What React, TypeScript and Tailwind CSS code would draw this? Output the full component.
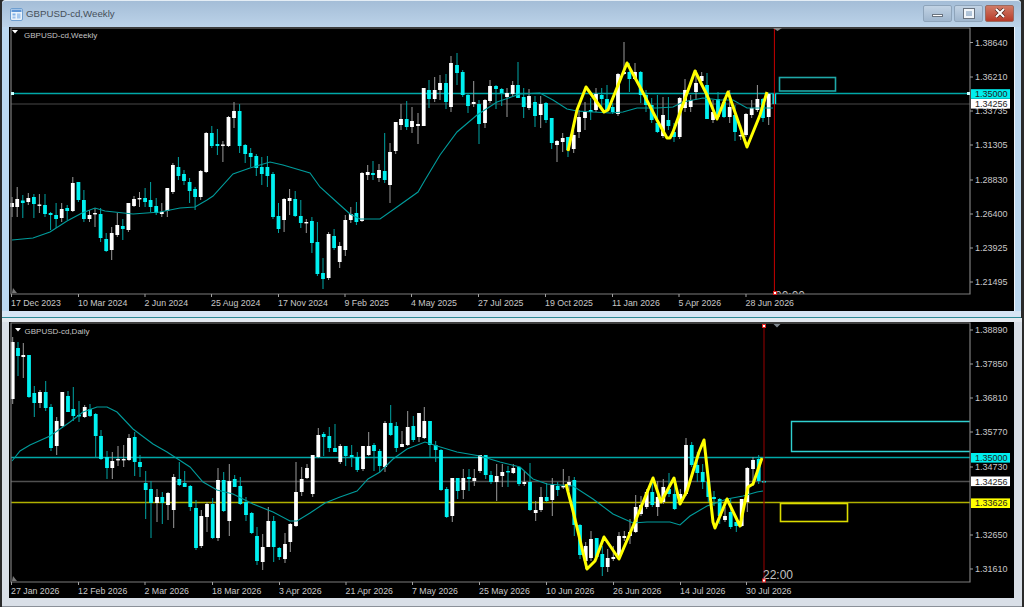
type Candle = [number, number, number, number, number, "w" | "c"];

// x, high, low, body top, body bottom, colour. All in page pixels.
const weeklyCandles: Candle[] = [
  [12, 197, 217, 203, 207, "w"], [17.2, 187, 217, 199, 207, "w"], [22.8, 195, 218, 200.5, 203, "c"], [28.3, 193, 205, 198, 202, "w"],
  [33.9, 194, 218, 197, 204, "c"], [39.4, 194, 213, 204.5, 205.5, "w"], [45, 194, 217, 205, 214, "c"], [50.6, 212, 230, 213, 215, "c"],
  [56.1, 203, 228, 215, 219, "c"], [61.7, 203, 222, 209, 218, "w"], [67.2, 205, 220, 208, 211, "c"], [72.8, 177, 212, 183, 211, "w"],
  [78.4, 182, 202, 182, 200, "c"], [83.9, 190, 222, 200, 219, "c"], [89.5, 210, 222, 215, 219, "w"], [95, 208, 227, 213, 214, "w"],
  [100.6, 208, 242, 214, 238, "c"], [106.2, 233, 252, 239, 251, "c"], [111.7, 227, 260, 233, 250, "w"], [117.3, 213, 237, 225, 235, "w"],
  [122.8, 219, 240, 226, 229, "c"], [128.4, 203, 232, 203, 230, "w"], [134, 196, 207, 199, 206, "w"], [139.5, 192, 207, 198, 199, "w"],
  [145.1, 188, 207, 198, 202, "c"], [150.6, 182, 212, 200, 207, "c"], [156.2, 198, 215, 206, 213, "c"], [161.8, 203, 217, 212, 214, "w"],
  [167.3, 188, 217, 188, 211, "w"], [172.9, 163, 194, 165, 192, "w"], [178.4, 157, 180, 167, 176, "c"], [184, 170, 185, 174, 181, "c"],
  [189.6, 178, 203, 182, 191, "c"], [195.1, 187, 210, 189, 197, "c"], [200.7, 170, 200, 171, 197, "w"], [206.2, 132, 173, 133, 172, "w"],
  [211.8, 126, 148, 133, 146, "c"], [217.4, 129, 155, 144, 146, "c"], [222.9, 141, 162, 144.5, 145.5, "w"], [228.5, 116, 147, 117, 146, "w"],
  [234, 102, 128, 111, 118, "w"], [239.6, 104, 153, 111, 146, "c"], [245.2, 144, 163, 145, 154, "c"], [250.7, 148, 167, 153, 157, "c"],
  [256.3, 154, 176, 156, 168, "c"], [261.8, 157, 185, 167, 174, "c"], [267.4, 156, 187, 167, 176, "c"], [273, 172, 219, 174, 217, "c"],
  [278.5, 203, 233, 216, 229, "c"], [284.1, 198, 232, 199, 220, "w"], [289.6, 189, 215, 198, 201, "w"], [295.2, 191, 217, 199, 216, "c"],
  [300.8, 200, 228, 216, 223, "c"], [306.3, 219, 233, 222, 223, "w"], [311.9, 217, 253, 221, 243, "c"], [317.4, 222, 276, 242, 274, "c"],
  [323, 258, 289, 273, 279, "c"], [328.6, 232, 280, 234, 278, "w"], [334.1, 229, 250, 236, 248, "c"], [339.7, 242, 268, 246, 262, "w"],
  [345.3, 215, 256, 220, 250, "w"], [350.8, 207, 223, 214, 220, "w"], [356.4, 202, 225, 213, 222, "c"], [362, 172, 222, 173, 221, "w"],
  [367.7, 165, 180, 172, 175, "w"], [373, 161, 180, 173, 175, "c"], [379, 164, 182, 170, 178, "w"], [384.7, 133, 183, 171, 180, "c"],
  [390, 143, 203, 152, 185, "w"], [395.7, 122, 154, 122, 151, "w"], [401, 104, 130, 119, 125, "w"], [406.7, 101, 130, 119, 127, "c"],
  [412, 107, 133, 121, 127, "w"], [418, 113, 144, 124, 126, "w"], [423.7, 88, 126, 88, 126, "w"], [429, 80, 108, 90, 99, "c"],
  [434.7, 77, 102, 90, 99, "w"], [440, 75, 100, 83, 90, "w"], [446, 74, 109, 83, 102, "c"], [451, 56, 112, 63, 107, "w"],
  [457, 53, 85, 65, 73, "c"], [462.7, 70, 97, 72, 95, "c"], [468, 93, 113, 95, 106, "c"], [473.7, 81, 107, 102, 104, "w"],
  [479, 100, 144, 104, 124, "c"], [485, 99, 128, 100, 123, "w"], [490, 80, 103, 86, 101, "w"], [496, 85, 109, 86, 89, "c"],
  [501.7, 88, 106, 89, 93, "c"], [507, 88, 117, 93, 97, "w"], [512.7, 81, 97, 85, 94, "w"], [518, 62, 98, 85, 98, "c"],
  [523.7, 88, 118, 97, 107, "c"], [529, 89, 110, 96, 108, "w"], [535, 96, 127, 102, 116, "c"], [540.7, 96, 128, 104, 115, "w"],
  [546, 102, 123, 103, 120, "c"], [551.7, 118, 149, 118, 143, "c"], [557, 140, 162, 141, 145, "w"], [562.7, 133, 152, 138, 142, "w"],
  [568, 137, 157, 137, 150, "c"], [573.7, 130, 153, 135, 149, "w"], [579, 110, 138, 117, 132, "w"], [585, 102, 130, 112, 118, "w"],
  [590.7, 98, 120, 110, 112, "c"], [596, 88, 112, 94, 110, "w"], [601.7, 88, 110, 95, 99, "c"], [607, 85, 110, 99, 110, "c"],
  [612.7, 103, 114, 107, 112, "c"], [618, 73, 116, 74, 114, "w"], [624, 42, 75, 72, 74, "w"], [629.4, 63, 92, 72, 79, "c"],
  [635, 63, 80, 72, 79, "w"], [640.7, 71, 103, 72, 95, "c"], [646, 90, 112, 95, 105, "c"], [651.7, 98, 123, 105, 120, "c"],
  [657.4, 95, 133, 123, 132, "c"], [663, 97, 138, 115, 136, "w"], [668.4, 97, 130, 120, 126, "c"], [674, 123, 142, 132, 137, "c"],
  [679.7, 97, 139, 98, 137, "w"], [685, 79, 112, 90, 108, "w"], [690.7, 95, 112, 100, 107, "w"], [696, 70, 100, 83, 92, "w"],
  [701.7, 72, 82, 76, 81, "w"], [707, 73, 119, 85, 119, "c"], [713, 100, 123, 112, 120, "w"], [718, 92, 118, 99, 117, "c"],
  [724, 98, 118, 102, 117, "c"], [729.7, 90, 123, 107, 117, "w"], [735, 105, 141, 115, 132, "c"], [740.7, 125, 140, 135, 136, "w"],
  [746, 113, 137, 114, 135, "w"], [751.7, 100, 118, 108, 115, "w"], [757.4, 85, 112, 99, 110, "w"], [763, 98, 122, 99, 118, "c"],
  [768.7, 93, 125, 94, 117, "w"], [774.3, 93, 105, 94, 104, "c"],
];

const dailyCandles: Candle[] = [
  [12.7, 338, 405, 343, 400, "w"], [18, 343, 377, 349, 357, "c"], [23.3, 344, 379, 356, 358, "w"], [29, 356, 399, 356, 398, "c"],
  [34.3, 387, 418, 394, 404, "c"], [40, 391, 409, 393, 404, "w"], [45.7, 382, 412, 393, 409, "c"], [51, 405, 452, 408, 449, "c"],
  [56.7, 418, 456, 422, 447, "w"], [62.3, 393, 429, 393, 427, "w"], [68, 392, 413, 397, 413, "c"], [73.3, 388, 422, 410, 417, "c"],
  [79, 402, 423, 416, 417, "c"], [84.7, 406, 419, 408, 418, "w"], [90, 405, 418, 410, 417, "c"], [95.7, 414, 459, 415, 437, "c"],
  [101, 431, 461, 437, 460, "c"], [107, 452, 480, 458, 469, "c"], [112.3, 453, 480, 462, 469, "w"], [118, 447, 467, 460, 461, "w"],
  [123.7, 446, 468, 460, 461, "w"], [129, 435, 462, 439, 461, "w"], [134.7, 433, 477, 438, 463, "c"], [140, 456, 478, 463, 468, "c"],
  [145.7, 472, 520, 484, 491, "c"], [151, 482, 539, 490, 504, "c"], [157, 490, 523, 498, 504, "w"], [162.3, 493, 525, 498, 504, "c"],
  [168, 493, 521, 494, 506, "w"], [173.7, 475, 529, 478, 511, "w"], [179.3, 463, 487, 480, 486, "c"], [184.7, 472, 488, 484, 488, "c"],
  [190.3, 486, 512, 487, 508, "c"], [196, 501, 551, 509, 549, "c"], [201.3, 511, 549, 517, 547, "w"], [207, 503, 533, 505, 518, "w"],
  [212.7, 499, 540, 505, 539, "c"], [218, 469, 542, 481, 539, "w"], [223.7, 473, 513, 481, 512, "c"], [229.3, 465, 537, 482, 522, "w"],
  [234.7, 476, 488, 480, 488, "c"], [240.3, 478, 506, 487, 505, "c"], [246, 498, 522, 503, 516, "c"], [251.7, 513, 535, 514, 534, "c"],
  [257, 528, 566, 537, 562, "c"], [262.7, 535, 571, 548, 563, "w"], [268.3, 508, 548, 522, 548, "w"], [273.7, 517, 563, 522, 548, "c"],
  [279.3, 548, 561, 549, 558, "c"], [285, 534, 564, 545, 560, "w"], [290.3, 524, 553, 525, 543, "w"], [296, 463, 528, 493, 527, "w"],
  [301.7, 468, 497, 480, 493, "w"], [307, 465, 480, 469, 479, "w"], [312.7, 456, 498, 456, 495, "w"], [318.3, 429, 459, 436, 458, "w"],
  [323.7, 433, 457, 435, 438, "c"], [329.3, 428, 453, 437, 449, "c"], [335, 425, 453, 449, 453, "c"], [340.3, 445, 465, 447, 463, "w"],
  [345.7, 447, 467, 447, 457, "c"], [351.7, 446, 468, 456, 458, "c"], [357.3, 453, 473, 458, 471, "c"], [363, 447, 472, 447, 470, "w"],
  [368.7, 433, 457, 447, 456, "w"], [374, 444, 472, 446, 452, "c"], [379.7, 450, 473, 452, 467, "c"], [385, 422, 473, 424, 468, "w"],
  [390.7, 406, 437, 424, 436, "c"], [396.3, 423, 453, 427, 449, "c"], [402, 432, 448, 445, 448, "w"], [407.7, 412, 447, 428, 446, "w"],
  [413.3, 417, 443, 427, 441, "c"], [419, 414, 443, 414, 438, "w"], [424.3, 408, 440, 422, 439, "w"], [430, 422, 458, 422, 446, "c"],
  [435.7, 442, 463, 446, 451, "c"], [441, 450, 492, 451, 491, "c"], [446.7, 488, 519, 490, 518, "c"], [452.3, 479, 523, 479, 517, "w"],
  [457.7, 479, 500, 479, 492, "c"], [463.3, 470, 500, 479, 491, "w"], [469, 470, 492, 478, 480, "c"], [474.3, 470, 487, 479, 482, "w"],
  [480, 456, 474, 456, 472, "w"], [485.7, 456, 480, 456, 476, "c"], [491, 472, 485, 476, 483, "c"], [496.7, 465, 502, 477, 483, "w"],
  [502.3, 465, 488, 473, 477, "w"], [508, 467, 488, 472, 473, "c"], [513.3, 465, 475, 469, 474, "w"], [519, 468, 487, 468, 485, "c"],
  [524.3, 472, 487, 483, 485, "w"], [530, 464, 512, 483, 511, "c"], [535.7, 502, 522, 511, 514, "w"], [541, 488, 513, 498, 511, "w"],
  [546.7, 484, 503, 498, 502, "c"], [552.3, 479, 517, 486, 501, "w"], [557.7, 483, 497, 487, 491, "c"], [563.3, 470, 490, 487, 488, "w"],
  [569, 477, 492, 483, 487, "w"], [574.3, 478, 537, 481, 526, "c"], [580, 525, 560, 526, 556, "c"], [585.7, 543, 570, 547, 562, "w"],
  [591, 532, 562, 540, 559, "w"], [596.7, 539, 561, 539, 558, "c"], [602.3, 547, 577, 555, 568, "c"], [607.7, 550, 573, 559, 568, "w"],
  [613.3, 547, 562, 558, 560, "w"], [619, 533, 560, 537, 557, "w"], [624.3, 532, 542, 537, 539, "w"], [630, 520, 545, 533, 537, "w"],
  [635.7, 496, 534, 508, 533, "w"], [641, 497, 517, 506, 515, "w"], [646.7, 490, 510, 493, 508, "w"], [652.3, 482, 508, 493, 506, "c"],
  [657.7, 482, 517, 498, 508, "w"], [663.3, 480, 505, 488, 503, "w"], [669, 474, 498, 490, 495, "c"], [674.7, 478, 511, 495, 510, "c"],
  [680.3, 490, 506, 495, 503, "w"], [686, 439, 497, 446, 495, "w"], [691.7, 443, 468, 446, 466, "c"], [697.3, 453, 483, 466, 474, "c"],
  [702.7, 465, 490, 473, 483, "c"], [708.3, 480, 503, 483, 498, "c"], [714, 492, 507, 498, 500, "c"], [719.7, 499, 525, 500, 517, "c"],
  [725, 508, 523, 517, 521, "w"], [730.7, 500, 530, 513, 528, "c"], [736.3, 517, 533, 523, 527, "c"], [741.7, 500, 528, 500, 527, "w"],
  [747.3, 468, 513, 469, 503, "w"], [753, 458, 487, 461, 470, "w"], [758.7, 456, 485, 460, 482, "c"], [764, 481, 484, 482, 483.5, "c"],
];

const weeklyMa = "12,240 33,238 50,232 67,221 82,213 95,208 105,211 133,214 160,212 180,208 195,207 207,200 213,196 233,174 250,168 270,162 283,165 310,173 320,187 340,205 350,214 360,219 380,219 397,207 418,192 425,180 440,155 457,132 477,115 497,102 520,94 540,93 553,100 567,109 577,111 610,113 623,112 637,108 657,108 673,107 683,102 703,98 720,100 733,100 747,108 773,108";
const dailyMa = "12,462 20,452 30,446 50,437 70,423 83,413 97,408 107,408 117,413 133,430 153,445 167,453 190,468 203,483 217,491 233,495 253,505 273,513 290,522 297,522 310,514 325,504 340,498 357,492 368,480 380,473 393,460 407,450 425,443 437,447 457,453 480,457 500,463 520,468 533,480 547,485 573,487 593,500 613,515 633,524 647,523 670,523 680,526 690,517 707,507 727,500 743,497 757,493 763,492";
const weeklyZigzag = "568,151 577,110 586,87 604,112 608,110 627,63 640,87 657,120 667,138 670,138 673,132 695,71 707,95 717,119 728,92 747,147 760,115 767,92";
const dailyZigzag = "566,485 573,512 587,570 595,562 604,538 619,560 637,518 653,479 661,503 674,479 680,505 687,492 699,453 704,441 713,523 715,529 727,500 740,527 748,488 753,485 762,459";

const weeklyPrices: [string, number][] = [
  ["1.38640", 42.5], ["1.36210", 77], ["1.33735", 111], ["1.31305", 145], ["1.28830", 180], ["1.26400", 214], ["1.23925", 248], ["1.21495", 282],
];
const dailyPrices: [string, number][] = [
  ["1.38890", 331], ["1.37850", 365], ["1.36810", 399], ["1.35770", 433], ["1.34730", 468], ["1.32650", 536], ["1.31610", 570],
];
const weeklyDates: [string, number][] = [
  ["17 Dec 2023", 11], ["10 Mar 2024", 78], ["2 Jun 2024", 144.5], ["25 Aug 2024", 211], ["17 Nov 2024", 278], ["9 Feb 2025", 344.5],
  ["4 May 2025", 411], ["27 Jul 2025", 478], ["19 Oct 2025", 545], ["11 Jan 2026", 612], ["5 Apr 2026", 678.5], ["28 Jun 2026", 745.5],
];
const dailyDates: [string, number][] = [
  ["27 Jan 2026", 11], ["12 Feb 2026", 78], ["2 Mar 2026", 144.5], ["18 Mar 2026", 212], ["3 Apr 2026", 279], ["21 Apr 2026", 345.5],
  ["7 May 2026", 412], ["25 May 2026", 479], ["10 Jun 2026", 546], ["26 Jun 2026", 613], ["14 Jul 2026", 680], ["30 Jul 2026", 746],
];

function Candles({ data }: { data: Candle[] }) {
  return (
    <>
      {data.map(([x, hi, lo, top, bot, kind]) => (
        <g key={x}>
          <line x1={x} x2={x} y1={hi} y2={lo} strokeWidth={1} stroke={kind === "w" ? "#9a9a9a" : "#00a4a4"} />
          <rect x={x - 1.9} y={top} width={3.8} height={Math.max(bot - top, 1.4)} fill={kind === "w" ? "#ffffff" : "#00f0f0"} />
        </g>
      ))}
    </>
  );
}

function PriceTag({ y, label, bg }: { y: number; label: string; bg: string }) {
  return (
    <g>
      <rect x={971} y={y - 4.8} width={39} height={9.6} fill={bg} />
      <text x={975} y={y + 3.2} className="fill-[#222] text-[9px]">{label}</text>
    </g>
  );
}

function Axes({ left, top, right, bottom, prices, dates }: {
  left: number; top: number; right: number; bottom: number; prices: [string, number][]; dates: [string, number][];
}) {
  return (
    <>
      <path d={`M${left} ${top}H${right}V${bottom}H${left}Z`} fill="none" stroke="#7c7c7c" strokeWidth={1.2} />
      {prices.map(([label, y]) => (
        <g key={label}>
          <line x1={right} x2={right + 3} y1={y} y2={y} stroke="#a0a0a0" />
          <text x={975} y={y + 3.2} className="fill-[#c8c8c8] text-[9px]">{label}</text>
        </g>
      ))}
      {dates.map(([label, x]) => (
        <g key={label}>
          <line x1={x + 0.5} x2={x + 0.5} y1={bottom} y2={bottom + 3} stroke="#a0a0a0" />
          <text x={x} y={bottom + 11.5} className="fill-[#c8c8c8] text-[8.8px]">{label}</text>
        </g>
      ))}
    </>
  );
}

function Marker({ x, y }: { x: number; y: number }) {
  return <rect x={x - 1.5} y={y - 1.5} width={3} height={3} fill="#fff" stroke="#e02020" strokeWidth={1} />;
}

function WeeklyChart() {
  return (
    <svg viewBox="9 27 1005 284" className="block h-[284px] w-[1005px] shrink-0 bg-black font-['Liberation_Sans',sans-serif]">
      <defs>
        <clipPath id="weeklyPlot"><rect x="11" y="28" width="959" height="266" /></clipPath>
      </defs>
      <line x1={11} x2={970} y1={93.5} y2={93.5} stroke="#00a8a8" strokeWidth={1.6} />
      <line x1={11} x2={970} y1={104} y2={104} stroke="#484848" strokeWidth={1.2} />
      <Candles data={weeklyCandles} />
      <polyline points={weeklyMa} fill="none" stroke="#009c9c" strokeWidth={1.1} />
      <polyline points={weeklyZigzag} fill="none" stroke="#ffff00" strokeWidth={3} strokeLinejoin="round" />
      <rect x={779.5} y={77.5} width={56} height={13.5} fill="none" stroke="#1fa8a8" strokeWidth={1.6} />
      <line x1={774.4} x2={774.4} y1={28} y2={294} stroke="#c80000" strokeWidth={1} />
      <text x={775} y={300} clipPath="url(#weeklyPlot)" className="fill-[#bbbbbb] text-[12px]">00:00</text>
      <Axes left={11} top={28} right={970} bottom={294} prices={weeklyPrices} dates={weeklyDates} />
      <path d="M773 28h9l-4.500 3z" fill="#888" />
      <Marker x={775} y={293} />
      <path d="M12 30l6 0-3 3.500z" fill="#fff" />
      <text x={24} y={38} className="fill-[#c4c4c4] text-[8px]">GBPUSD-cd,Weekly</text>
      <rect x={11} y={92} width={3} height={3} fill="#c8ffff" />
      <rect x={967} y={92} width={3} height={3} fill="#c8ffff" />
      <PriceTag y={94} label="1.35000" bg="#00eeee" />
      <PriceTag y={103.800} label="1.34256" bg="#ffffff" />
      <path d="M13 288l4 5h-5z" fill="#777" />
    </svg>
  );
}

function DailyChart() {
  return (
    <svg viewBox="9 323 1005 276" className="block h-[276px] w-[1005px] shrink-0 bg-black font-['Liberation_Sans',sans-serif]">
      <line x1={11} x2={970} y1={458.500} y2={458.500} stroke="#00a8a8" strokeWidth={1.6} />
      <line x1={11} x2={970} y1={482.500} y2={482.500} stroke="#505050" strokeWidth={1.3} />
      <line x1={11} x2={970} y1={503.500} y2={503.500} stroke="#b0b000" strokeWidth={1.6} />
      <Candles data={dailyCandles} />
      <polyline points={dailyMa} fill="none" stroke="#009c9c" strokeWidth={1.1} />
      <polyline points={dailyZigzag} fill="none" stroke="#ffff00" strokeWidth={3} strokeLinejoin="round" />
      <path d="M970 422.500H791.500V452.500H970" fill="none" stroke="#30d0d0" strokeWidth={1.4} />
      <rect x={780.500} y={504.500} width={67} height={18} fill="none" stroke="#dcdc00" strokeWidth={1.6} />
      <line x1={764} x2={764} y1={325} y2={583} stroke="#8c0000" strokeWidth={1.1} />
      <text x={763} y={579.500} className="fill-[#c0c0c0] text-[12px]">22:00</text>
      <Axes left={11} top={324} right={970} bottom={583} prices={dailyPrices} dates={dailyDates} />
      <path d="M773.500 325h7l-3.500 3.500z" fill="#808890" />
      <Marker x={764} y={327} />
      <Marker x={764} y={581.500} />
      <path d="M15 329l6 0-3 3.500z" fill="#fff" />
      <text x={24.500} y={334.500} className="fill-[#c4c4c4] text-[8px]">GBPUSD-cd,Daily</text>
      <PriceTag y={458.800} label="1.35000" bg="#00eeee" />
      <PriceTag y={482.300} label="1.34256" bg="#ffffff" />
      <PriceTag y={504.200} label="1.33626" bg="#ffff00" />
      <path d="M13 577l4 5h-5z" fill="#777" />
    </svg>
  );
}

function WindowIcon() {
  return (
    <svg viewBox="0 0 13 13" className="h-[13px] w-[13px] shrink-0">
      <rect x="0.500" y="0.500" width="12" height="12" rx="1.500" fill="#e8f2fb" stroke="#6f9fd0" />
      <rect x="1.500" y="1.500" width="10" height="2.500" fill="#5f96d6" />
      <rect x="2.500" y="5.500" width="3" height="2" fill="#7fb0e6" />
      <rect x="7" y="5.500" width="3.500" height="5" fill="#a5c8ee" />
      <rect x="2.500" y="8.500" width="3" height="2" fill="#9cc0ea" />
    </svg>
  );
}

function WindowButtons() {
  return (
    <div className="flex gap-[2px]">
      <div className="flex h-[17px] w-[29px] items-end justify-center rounded-[2px] border border-[#8ea4ba] bg-gradient-to-b from-[#c2d3e4] to-[#9fb6ce] pb-[4px]">
        <div className="h-[3px] w-[11px] border border-[#6a7480] bg-white" />
      </div>
      <div className="flex h-[17px] w-[29px] items-center justify-center rounded-[2px] border border-[#8ea4ba] bg-gradient-to-b from-[#c2d3e4] to-[#9fb6ce]">
        <div className="h-[9px] w-[10px] border-2 border-[#f2f6fa] outline outline-1 outline-[#6a7480]" />
      </div>
      <div className="flex h-[17px] w-[29px] items-center justify-center rounded-[2px] border border-[#9a6a60] bg-gradient-to-b from-[#d07a66] to-[#b83a28]">
        <svg viewBox="0 0 12 10" className="h-[10px] w-[12px]">
          <path d="M2 1l8 8M10 1L2 9" stroke="#50281f" strokeWidth={3.400} />
          <path d="M2 1l8 8M10 1L2 9" stroke="#ffffff" strokeWidth={2} />
        </svg>
      </div>
    </div>
  );
}

export default function App() {
  return (
    <div className="flex h-[607px] w-[1024px] flex-col overflow-hidden bg-[#2a2a2a] font-['Liberation_Sans',sans-serif]">
      {/* Weekly window */}
      <div className="ml-[2px] mr-[3px] flex h-[318px] shrink-0 flex-col rounded-t-[4px] border-b border-[#2d8a96] bg-[#bcd8f0]">
        <div className="flex h-[27px] shrink-0 items-center rounded-t-[4px] border-t border-[#e4edf5] bg-gradient-to-b from-[#a4bdd7] to-[#bcd3e9] pl-[8px] pr-[7px]">
          <WindowIcon />
          <span className="ml-[3px] text-[9.700px] text-[#46505a]">GBPUSD-cd,Weekly</span>
          <div className="ml-auto pb-[2px]">
            <WindowButtons />
          </div>
        </div>
        <div className="flex pl-[7px]">
          <WeeklyChart />
          <div className="w-px bg-[#f0f6fc]" />
        </div>
        <div className="h-[6px] shrink-0 bg-[#d6e5f4]" />
      </div>
      {/* Daily window */}
      <div className="ml-[2px] mr-[2px] flex flex-1 flex-col bg-[#d9dfe7]">
        <div className="h-[4px] shrink-0 bg-[#e4e9ef]" />
        <div className="flex pl-[7px]">
          <DailyChart />
        </div>
        <div className="mt-auto h-px bg-[#8a9098]" />
      </div>
    </div>
  );
}
